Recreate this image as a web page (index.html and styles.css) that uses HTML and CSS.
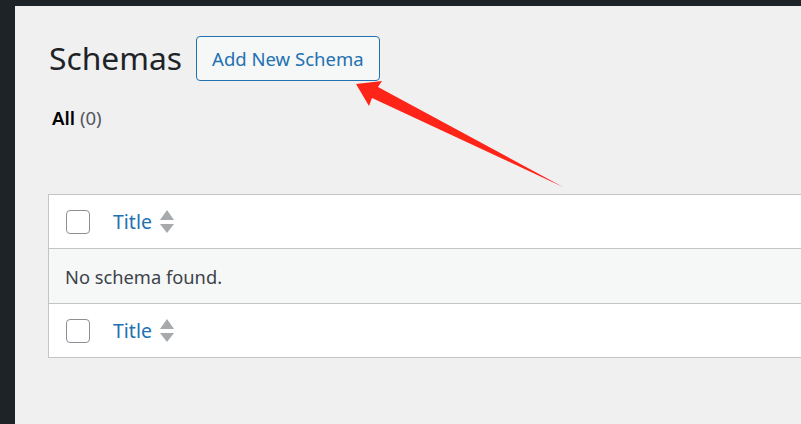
FILE: index.html
```html
<!DOCTYPE html>
<html lang="en">
<head>
<meta charset="utf-8">
<title>Schemas</title>
<link rel="stylesheet" href="styles.css">
</head>
<body>
<div class="topbar"></div>
<div class="frame">
  <aside class="sidebar"></aside>
  <main class="content">
    <div class="heading">
      <h1 class="title">Schemas</h1>
      <a class="add-btn" href="#">Add New Schema</a>
    </div>
    <ul class="filters">
      <li><span class="current">All</span> <span class="count">(0)</span></li>
    </ul>
    <div class="table">
      <div class="row head">
        <span class="check"></span>
        <span class="col-title">Title</span>
        <span class="sort"><span class="up"></span><span class="down"></span></span>
      </div>
      <div class="row empty">No schema found.</div>
      <div class="row foot">
        <span class="check"></span>
        <span class="col-title">Title</span>
        <span class="sort"><span class="up"></span><span class="down"></span></span>
      </div>
    </div>
  </main>
</div>
<svg class="annot" width="801" height="424" viewBox="0 0 801 424">
  <polygon points="356,84 382,81 378,87 563,187 372,98 369,106" fill="#ff2418"/>
</svg>
</body>
</html>
```
FILE: styles.css
```css
html, body {
  margin: 0;
  padding: 0;
}
body {
  background: #f0f0f1;
  font-family: "Noto Sans", "Open Sans", sans-serif;
  color: #1d2327;
  width: 801px;
  height: 424px;
  overflow: hidden;
  position: relative;
}
.topbar {
  height: 6px;
  background: #1d2327;
}
.frame {
  display: flex;
  height: 418px;
}
.sidebar {
  width: 15px;
  flex: none;
  background: #1d2327;
}
.content {
  flex: 1;
  padding: 30px 0 0 33px;
  overflow: hidden;
}
.heading {
  display: flex;
  align-items: center;
  gap: 14px;
  height: 45px;
}
.title {
  margin: 0;
  font-size: 31.8px;
  font-weight: 400;
  color: #1d2327;
  line-height: 1;
  padding-left: 1px;
  position: relative;
  top: -1px;
}
.add-btn {
  box-sizing: border-box;
  height: 45px;
  display: flex;
  align-items: center;
  padding: 0 15px;
  border: 1px solid #2271b1;
  border-radius: 4px;
  background: #f6f7f7;
  color: #2271b1;
  font-size: 18.5px;
  text-decoration: none;
}
.filters {
  list-style: none;
  margin: 22px 0 0 4px;
  padding: 0;
  font-size: 18.6px;
  height: 30px;
  line-height: 30px;
}
.current {
  font-weight: 600;
  color: #000;
}
.count {
  color: #50575e;
}
.table {
  margin-top: 61px;
  margin-right: -20px;
  background: #fff;
  border: 1px solid #c3c4c7;
}
.row {
  height: 54px;
  display: flex;
  align-items: center;
  box-sizing: border-box;
}
.row.head,
.row.empty {
  border-bottom: 1px solid #c3c4c7;
}
.row.empty {
  background: #f6f7f7;
  padding-left: 16px;
  font-size: 18.3px;
  color: #3c434a;
  height: 55px;
}
.row.foot {
  height: 53px;
}
.check {
  box-sizing: border-box;
  width: 24px;
  height: 24px;
  margin-left: 17px;
  border: 1px solid #8c8f94;
  border-radius: 4px;
  background: #fff;
  flex: none;
}
.col-title {
  margin-left: 23px;
  font-size: 19.5px;
  color: #2271b1;
}
.sort {
  display: flex;
  flex-direction: column;
  gap: 4px;
  margin-left: 8px;
}
.up, .down {
  width: 0;
  height: 0;
  border-left: 7px solid transparent;
  border-right: 7px solid transparent;
}
.up {
  border-bottom: 10px solid #a7aaad;
}
.down {
  border-top: 9px solid #a7aaad;
}
.annot {
  position: absolute;
  left: 0;
  top: 0;
  pointer-events: none;
}
```
